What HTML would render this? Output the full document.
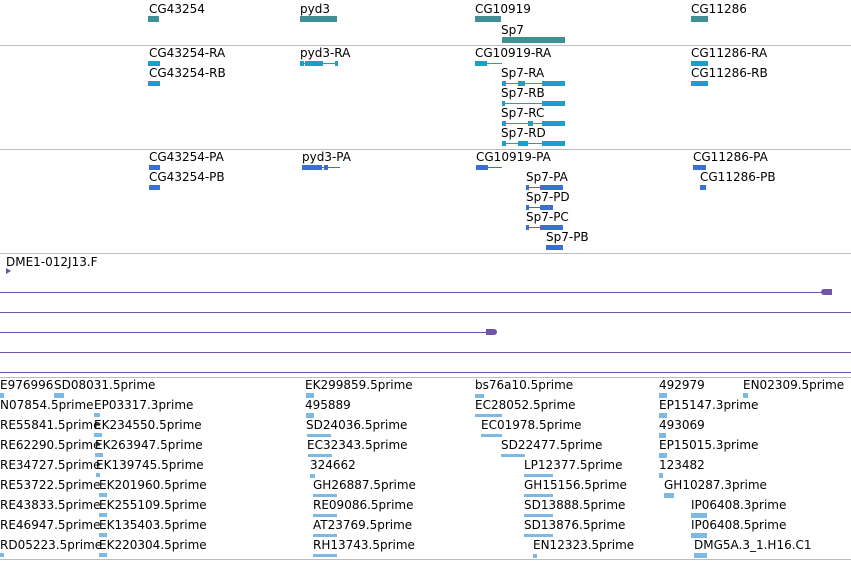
<!DOCTYPE html>
<html><head><meta charset="utf-8"><style>
html,body{margin:0;padding:0;background:#fff;width:851px;height:561px;overflow:hidden;position:relative}
.t{position:absolute;font-family:"DejaVu Sans","Liberation Sans",sans-serif;font-size:12px;color:#000;white-space:nowrap;line-height:14px}
.b{position:absolute}
.h{position:absolute;left:0;width:851px;height:1px;background:#bcbcbc}
.p{position:absolute;height:1px;background:#6e55a8}
.g1{background:#3f8f94}.g2{background:#1b9fc9}.g3{background:#3a70d2}.g5{background:#7db9e2}
</style></head><body>
<!-- track 1 -->
<div class="t" style="left:149px;top:2px">CG43254</div><div class="b g1" style="left:148px;top:16px;width:11px;height:6px"></div>
<div class="t" style="left:300px;top:2px">pyd3</div><div class="b g1" style="left:300px;top:16px;width:37px;height:6px"></div>
<div class="t" style="left:475px;top:2px">CG10919</div><div class="b g1" style="left:475px;top:16px;width:26px;height:6px"></div>
<div class="t" style="left:501px;top:23px">Sp7</div><div class="b g1" style="left:502px;top:37px;width:63px;height:6px"></div>
<div class="t" style="left:691px;top:2px">CG11286</div><div class="b g1" style="left:691px;top:16px;width:17px;height:6px"></div>
<div class="h" style="top:45px"></div>
<!-- track 2 -->
<div class="t" style="left:149px;top:46px">CG43254-RA</div><div class="b g2" style="left:148px;top:61px;width:12px;height:5px"></div>
<div class="t" style="left:149px;top:66px">CG43254-RB</div><div class="b g2" style="left:148px;top:81px;width:12px;height:5px"></div>
<div class="t" style="left:300px;top:46px">pyd3-RA</div><div class="b g2" style="left:300px;top:63px;width:38px;height:1px"></div><div class="b g2" style="left:305px;top:61px;width:14px;height:5px"></div><div class="b g2" style="left:300px;top:61px;width:4px;height:5px"></div><div class="b g2" style="left:319px;top:61px;width:4px;height:5px"></div><div class="b g2" style="left:335px;top:61px;width:3px;height:5px"></div>
<div class="t" style="left:475px;top:46px">CG10919-RA</div><div class="b g2" style="left:475px;top:63px;width:27px;height:1px"></div><div class="b g2" style="left:475px;top:61px;width:12px;height:5px"></div>
<div class="t" style="left:501px;top:66px">Sp7-RA</div><div class="b g2" style="left:502px;top:83px;width:63px;height:1px"></div><div class="b g2" style="left:502px;top:81px;width:4px;height:5px"></div><div class="b g2" style="left:518px;top:81px;width:7px;height:5px"></div><div class="b g2" style="left:542px;top:81px;width:23px;height:5px"></div>
<div class="t" style="left:501px;top:86px">Sp7-RB</div><div class="b g2" style="left:502px;top:103px;width:63px;height:1px"></div><div class="b g2" style="left:502px;top:101px;width:3px;height:5px"></div><div class="b g2" style="left:542px;top:101px;width:23px;height:5px"></div>
<div class="t" style="left:501px;top:106px">Sp7-RC</div><div class="b g2" style="left:502px;top:123px;width:63px;height:1px"></div><div class="b g2" style="left:502px;top:121px;width:4px;height:5px"></div><div class="b g2" style="left:528px;top:121px;width:5px;height:5px"></div><div class="b g2" style="left:542px;top:121px;width:23px;height:5px"></div>
<div class="t" style="left:501px;top:126px">Sp7-RD</div><div class="b g2" style="left:502px;top:143px;width:63px;height:1px"></div><div class="b g2" style="left:502px;top:141px;width:4px;height:5px"></div><div class="b g2" style="left:518px;top:141px;width:10px;height:5px"></div><div class="b g2" style="left:542px;top:141px;width:23px;height:5px"></div>
<div class="t" style="left:691px;top:46px">CG11286-RA</div><div class="b g2" style="left:691px;top:61px;width:17px;height:5px"></div>
<div class="t" style="left:691px;top:66px">CG11286-RB</div><div class="b g2" style="left:691px;top:81px;width:17px;height:5px"></div>
<div class="h" style="top:149px"></div>
<!-- track 3 -->
<div class="t" style="left:149px;top:150px">CG43254-PA</div><div class="b g3" style="left:149px;top:165px;width:11px;height:5px"></div>
<div class="t" style="left:149px;top:170px">CG43254-PB</div><div class="b g3" style="left:149px;top:185px;width:11px;height:5px"></div>
<div class="t" style="left:302px;top:150px">pyd3-PA</div><div class="b g3" style="left:302px;top:167px;width:38px;height:1px"></div><div class="b g3" style="left:302px;top:165px;width:20px;height:5px"></div><div class="b g3" style="left:324px;top:165px;width:4px;height:5px"></div>
<div class="t" style="left:476px;top:150px">CG10919-PA</div><div class="b g3" style="left:476px;top:167px;width:26px;height:1px"></div><div class="b g3" style="left:476px;top:165px;width:12px;height:5px"></div>
<div class="t" style="left:526px;top:170px">Sp7-PA</div><div class="b g3" style="left:526px;top:187px;width:37px;height:1px"></div><div class="b g3" style="left:526px;top:185px;width:3px;height:5px"></div><div class="b g3" style="left:540px;top:185px;width:23px;height:5px"></div>
<div class="t" style="left:526px;top:190px">Sp7-PD</div><div class="b g3" style="left:526px;top:207px;width:27px;height:1px"></div><div class="b g3" style="left:526px;top:205px;width:3px;height:5px"></div><div class="b g3" style="left:540px;top:205px;width:13px;height:5px"></div>
<div class="t" style="left:526px;top:210px">Sp7-PC</div><div class="b g3" style="left:526px;top:227px;width:37px;height:1px"></div><div class="b g3" style="left:526px;top:225px;width:3px;height:5px"></div><div class="b g3" style="left:540px;top:225px;width:23px;height:5px"></div>
<div class="t" style="left:546px;top:230px">Sp7-PB</div><div class="b g3" style="left:546px;top:245px;width:17px;height:5px"></div>
<div class="t" style="left:693px;top:150px">CG11286-PA</div><div class="b g3" style="left:693px;top:165px;width:13px;height:5px"></div>
<div class="t" style="left:700px;top:170px">CG11286-PB</div><div class="b g3" style="left:700px;top:185px;width:6px;height:5px"></div>
<div class="h" style="top:253px"></div>
<!-- track 4 -->
<div class="t" style="left:6px;top:255px">DME1-012J13.F</div><div class="b" style="left:6px;top:268px;width:0;height:0;border-left:5px solid #6e55a8;border-top:3px solid transparent;border-bottom:3px solid transparent"></div>
<div class="p" style="left:0;top:292px;width:832px"></div><div class="b" style="left:821px;top:289px;width:11px;height:6px;background:#6e55a8;border-radius:3px 0 0 3px"></div>
<div class="p" style="left:0;top:312px;width:851px"></div>
<div class="p" style="left:0;top:332px;width:490px"></div><div class="b" style="left:486px;top:329px;width:11px;height:6px;background:#6e55a8;border-radius:0 3px 3px 0"></div>
<div class="p" style="left:0;top:352px;width:851px"></div>
<div class="p" style="left:0;top:372px;width:851px"></div>
<div class="h" style="top:377px"></div>
<!-- track 5 -->
<div class="t" style="left:0;top:378px">E976996</div><div class="t" style="left:54px;top:378px">SD08031.5prime</div>
<div class="t" style="left:0;top:398px">N07854.5prime</div><div class="t" style="left:94px;top:398px">EP03317.3prime</div>
<div class="t" style="left:0;top:418px">RE55841.5prime</div><div class="t" style="left:94px;top:418px">EK234550.5prime</div>
<div class="t" style="left:0;top:438px">RE62290.5prime</div><div class="t" style="left:95px;top:438px">EK263947.5prime</div>
<div class="t" style="left:0;top:458px">RE34727.5prime</div><div class="t" style="left:96px;top:458px">EK139745.5prime</div>
<div class="t" style="left:0;top:478px">RE53722.5prime</div><div class="t" style="left:99px;top:478px">EK201960.5prime</div>
<div class="t" style="left:0;top:498px">RE43833.5prime</div><div class="t" style="left:99px;top:498px">EK255109.5prime</div>
<div class="t" style="left:0;top:518px">RE46947.5prime</div><div class="t" style="left:99px;top:518px">EK135403.5prime</div>
<div class="t" style="left:0;top:538px">RD05223.5prime</div><div class="t" style="left:99px;top:538px">EK220304.5prime</div>
<div class="t" style="left:305px;top:378px">EK299859.5prime</div>
<div class="t" style="left:305px;top:398px">495889</div>
<div class="t" style="left:306px;top:418px">SD24036.5prime</div>
<div class="t" style="left:307px;top:438px">EC32343.5prime</div>
<div class="t" style="left:310px;top:458px">324662</div>
<div class="t" style="left:313px;top:478px">GH26887.5prime</div>
<div class="t" style="left:313px;top:498px">RE09086.5prime</div>
<div class="t" style="left:313px;top:518px">AT23769.5prime</div>
<div class="t" style="left:313px;top:538px">RH13743.5prime</div>
<div class="t" style="left:475px;top:378px">bs76a10.5prime</div>
<div class="t" style="left:475px;top:398px">EC28052.5prime</div>
<div class="t" style="left:481px;top:418px">EC01978.5prime</div>
<div class="t" style="left:501px;top:438px">SD22477.5prime</div>
<div class="t" style="left:524px;top:458px">LP12377.5prime</div>
<div class="t" style="left:524px;top:478px">GH15156.5prime</div>
<div class="t" style="left:524px;top:498px">SD13888.5prime</div>
<div class="t" style="left:524px;top:518px">SD13876.5prime</div>
<div class="t" style="left:533px;top:538px">EN12323.5prime</div>
<div class="t" style="left:659px;top:378px">492979</div><div class="t" style="left:743px;top:378px">EN02309.5prime</div>
<div class="t" style="left:659px;top:398px">EP15147.3prime</div>
<div class="t" style="left:659px;top:418px">493069</div>
<div class="t" style="left:659px;top:438px">EP15015.3prime</div>
<div class="t" style="left:659px;top:458px">123482</div>
<div class="t" style="left:664px;top:478px">GH10287.3prime</div>
<div class="t" style="left:691px;top:498px">IP06408.3prime</div>
<div class="t" style="left:691px;top:518px">IP06408.5prime</div>
<div class="t" style="left:694px;top:538px">DMG5A.3_1.H16.C1</div>
<!-- glyphs track5 -->
<div class="b g5" style="left:0;top:393px;width:4px;height:5px"></div><div class="b g5" style="left:54px;top:393px;width:10px;height:5px"></div>
<div class="b g5" style="left:94px;top:413px;width:6px;height:4px"></div>
<div class="b g5" style="left:94px;top:433px;width:8px;height:4px"></div>
<div class="b g5" style="left:95px;top:453px;width:8px;height:4px"></div>
<div class="b g5" style="left:96px;top:473px;width:4px;height:4px"></div>
<div class="b g5" style="left:99px;top:493px;width:8px;height:4px"></div>
<div class="b g5" style="left:99px;top:513px;width:8px;height:4px"></div>
<div class="b g5" style="left:99px;top:533px;width:8px;height:4px"></div>
<div class="b g5" style="left:99px;top:553px;width:8px;height:4px"></div>
<div class="b g5" style="left:0;top:553px;width:4px;height:4px"></div>
<div class="b g5" style="left:306px;top:393px;width:8px;height:5px"></div>
<div class="b g5" style="left:306px;top:413px;width:8px;height:5px"></div>
<div class="b g5" style="left:307px;top:434px;width:24px;height:3px"></div>
<div class="b g5" style="left:308px;top:454px;width:24px;height:3px"></div>
<div class="b g5" style="left:310px;top:474px;width:5px;height:4px"></div>
<div class="b g5" style="left:313px;top:494px;width:24px;height:3px"></div>
<div class="b g5" style="left:313px;top:514px;width:24px;height:3px"></div>
<div class="b g5" style="left:313px;top:534px;width:24px;height:3px"></div>
<div class="b g5" style="left:313px;top:554px;width:24px;height:3px"></div>
<div class="b g5" style="left:475px;top:394px;width:9px;height:4px"></div>
<div class="b g5" style="left:475px;top:414px;width:27px;height:3px"></div>
<div class="b g5" style="left:481px;top:434px;width:21px;height:3px"></div>
<div class="b g5" style="left:501px;top:454px;width:24px;height:3px"></div>
<div class="b g5" style="left:524px;top:474px;width:29px;height:3px"></div>
<div class="b g5" style="left:524px;top:494px;width:29px;height:3px"></div>
<div class="b g5" style="left:524px;top:514px;width:29px;height:3px"></div>
<div class="b g5" style="left:524px;top:534px;width:29px;height:3px"></div>
<div class="b g5" style="left:533px;top:554px;width:4px;height:4px"></div>
<div class="b g5" style="left:659px;top:393px;width:8px;height:5px"></div><div class="b g5" style="left:743px;top:393px;width:5px;height:5px"></div>
<div class="b g5" style="left:659px;top:413px;width:8px;height:5px"></div>
<div class="b g5" style="left:659px;top:433px;width:7px;height:5px"></div>
<div class="b g5" style="left:659px;top:453px;width:8px;height:5px"></div>
<div class="b g5" style="left:659px;top:473px;width:4px;height:5px"></div>
<div class="b g5" style="left:664px;top:493px;width:10px;height:5px"></div>
<div class="b g5" style="left:691px;top:513px;width:16px;height:5px"></div>
<div class="b g5" style="left:691px;top:533px;width:16px;height:5px"></div>
<div class="b g5" style="left:694px;top:553px;width:13px;height:5px"></div>
<div class="h" style="top:559px"></div>
</body></html>
